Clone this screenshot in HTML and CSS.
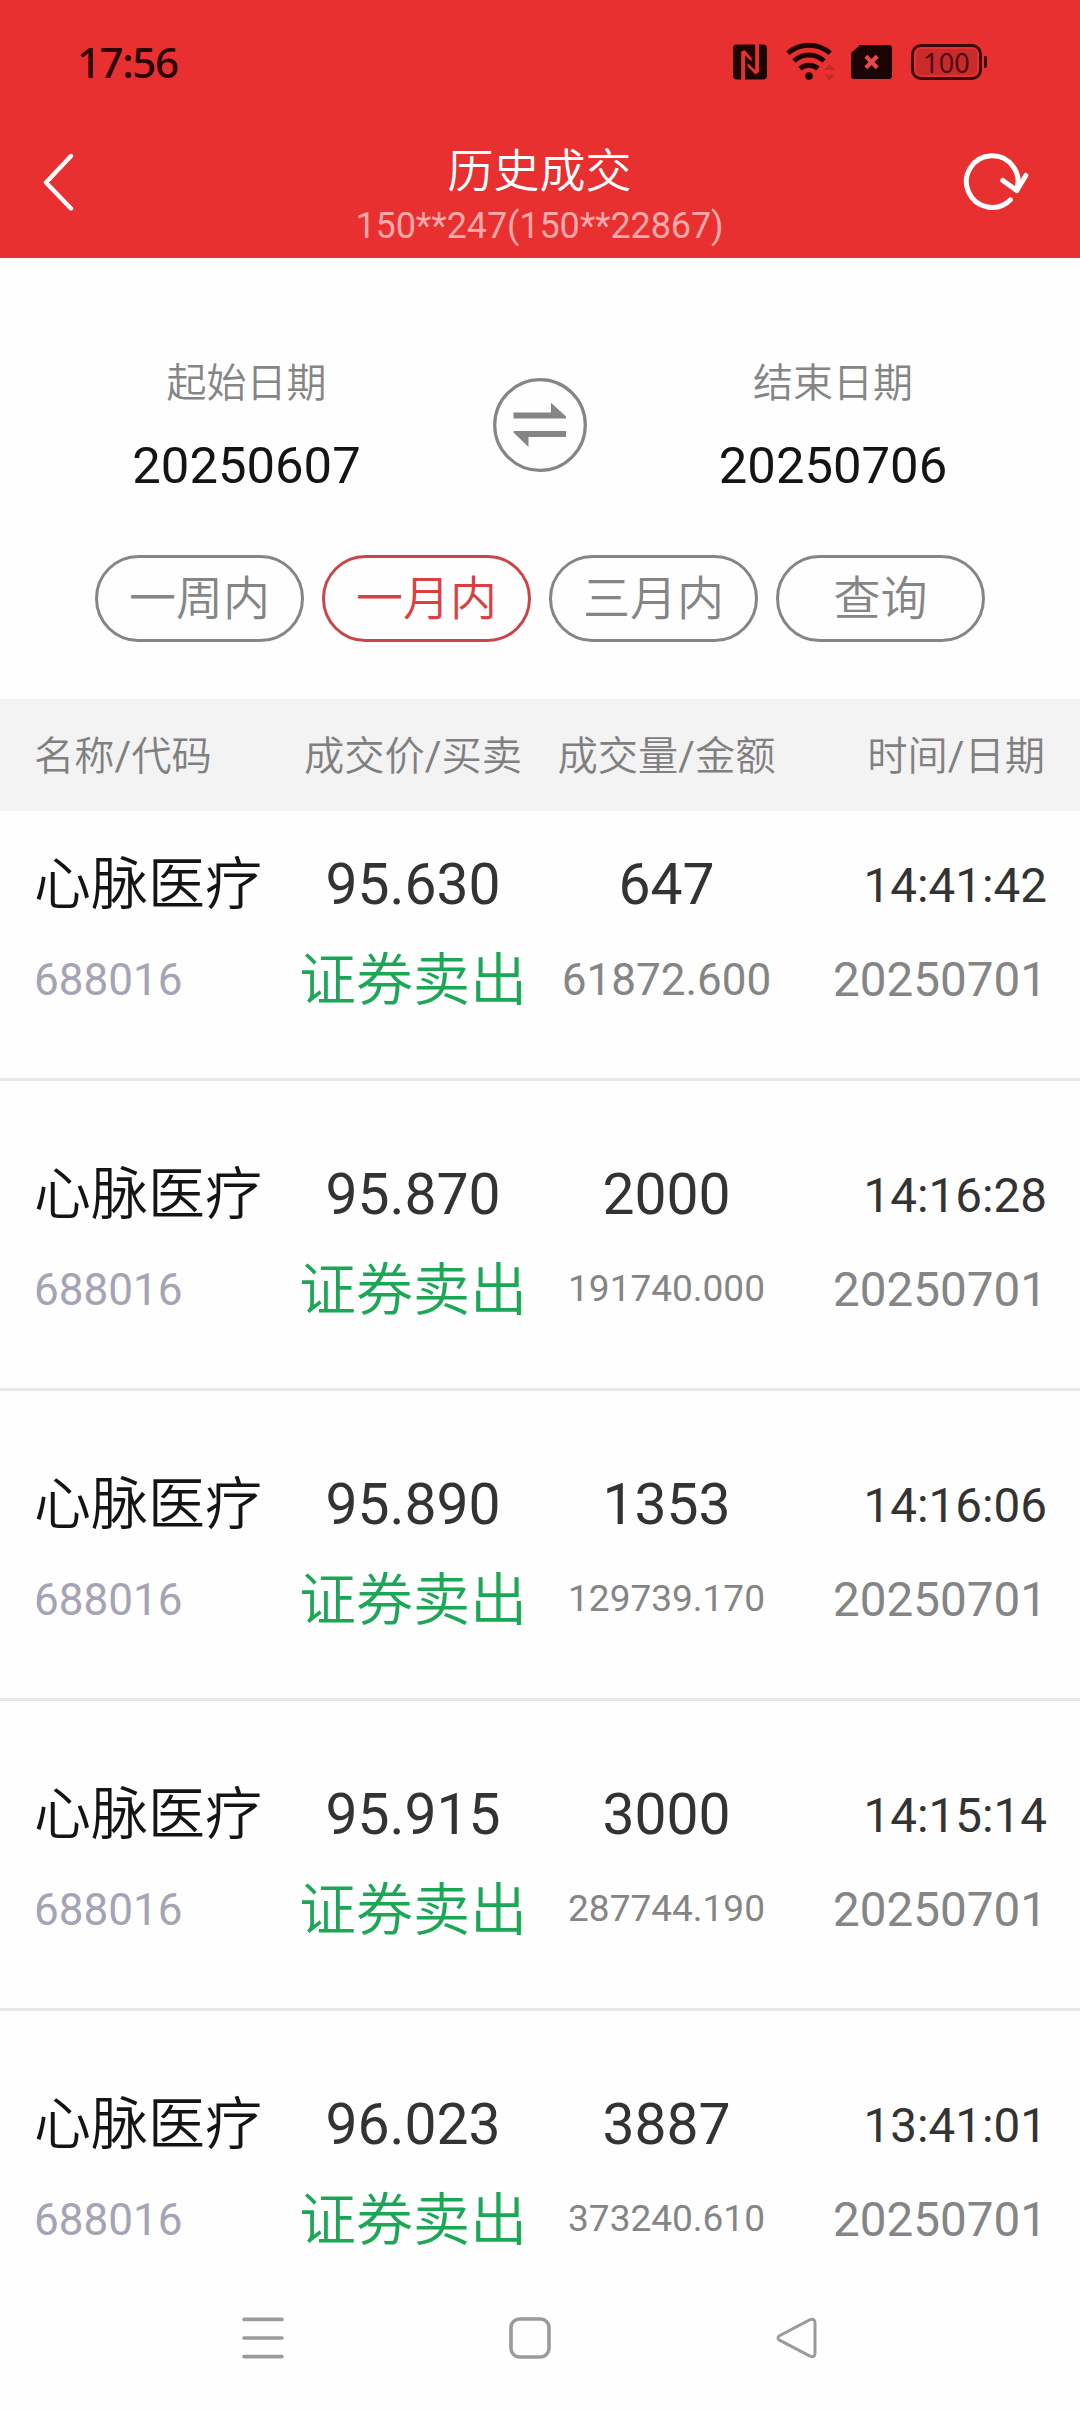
FILE: index.html
```html
<!DOCTYPE html>
<html lang="zh-CN">
<head>
    <meta charset="UTF-8">
    <meta name="viewport" content="width=device-width, initial-scale=1.0">
    <title>历史成交</title>
    <link rel="stylesheet" href="styles.css">
</head>
<body>
    <div class="status-bar">
        <span class="clock">17:56</span>
        <div class="status-icons">
            <!-- NFC -->
            <svg class="icon-nfc" width="34" height="36" viewBox="0 0 34 36">
                <rect x="0" y="0.5" width="34" height="35" rx="4" fill="#1c0304"/>
                <path d="M8.2 36V7.5L11.5 6L18.6 14V17.5L12 11.2V36ZM22.2 0H26V28L22.5 30.5L14.6 22.5V19L22.2 26Z" fill="#e83030"/>
            </svg>
            <!-- WiFi -->
            <svg class="icon-wifi" width="50" height="40" viewBox="0 0 50 40">
                <g fill="none" stroke="#1c0304" stroke-width="5">
                    <path d="M1.8 12.2A32 32 0 0 1 44.2 12.2"/>
                    <path d="M8 20A22 22 0 0 1 38 20"/>
                    <path d="M14 27.6A13.5 13.5 0 0 1 32 27.6"/>
                </g>
                <circle cx="23" cy="35" r="3.8" fill="#1c0304"/>
                <path d="M38 29L43.5 23L49 29ZM38 33.5H49L43.5 39.5Z" fill="#c8282a"/>
            </svg>
            <!-- SIM -->
            <svg class="icon-sim" width="41" height="34" viewBox="0 0 41 34">
                <path d="M9 0H38Q41 0 41 3V31Q41 34 38 34H3Q0 34 0 31V8Z" fill="#1c0304"/>
                <path d="M14.8 11.2L26.2 22.8M26.2 11.2L14.8 22.8" stroke="#e84a4a" stroke-width="4.2"/>
            </svg>
            <div class="battery">100</div>
        </div>
    </div>

    <div class="header">
        <svg class="back" width="32" height="58" viewBox="0 0 32 58">
            <path d="M28 3L3 29.5L28 55.5" fill="none" stroke="#fff" stroke-width="4.4" stroke-linecap="round" stroke-linejoin="round"/>
        </svg>
        <div class="header-title">
            <h1>历史成交</h1>
            <div class="account">150**247(150**22867)</div>
        </div>
        <svg class="refresh" width="66" height="60" viewBox="0 0 66 60">
            <g fill="none" stroke="#fff" stroke-width="5" stroke-linecap="round" stroke-linejoin="round">
                <path d="M47.5 46.8A25.8 25.8 0 1 1 53.6 37"/>
                <path d="M39.8 27.5L53.8 37.5L62.8 22.5"/>
            </g>
        </svg>
    </div>

    <div class="filter">
        <div class="dates">
            <div class="date-item">
                <div class="date-label">起始日期</div>
                <div class="date-value">20250607</div>
            </div>
            <svg class="swap" width="94" height="94" viewBox="0 0 94 94">
                <circle cx="47" cy="47" r="45.3" fill="none" stroke="#858585" stroke-width="3.2"/>
                <path d="M20.5 34.5H58V24.7L73 38.5V40.5H20.5ZM73 59V53H20.5V54.5L35.5 69V59Z" fill="#858585"/>
            </svg>
            <div class="date-item">
                <div class="date-label">结束日期</div>
                <div class="date-value">20250706</div>
            </div>
        </div>
        <div class="buttons">
            <button>一周内</button>
            <button class="active">一月内</button>
            <button>三月内</button>
            <button>查询</button>
        </div>
    </div>

    <div class="grid-row table-head">
        <span>名称/代码</span>
        <span>成交价/买卖</span>
        <span>成交量/金额</span>
        <span>时间/日期</span>
    </div>

    <div class="list">
        <div class="grid-row record">
            <div><div class="top name">心脉医疗</div><div class="sub code">688016</div></div>
            <div><div class="top">95.630</div><div class="sub sell">证券卖出</div></div>
            <div><div class="top">647</div><div class="sub">61872.600</div></div>
            <div><div class="top time">14:41:42</div><div class="sub date">20250701</div></div>
        </div>
        <div class="grid-row record">
            <div><div class="top name">心脉医疗</div><div class="sub code">688016</div></div>
            <div><div class="top">95.870</div><div class="sub sell">证券卖出</div></div>
            <div><div class="top">2000</div><div class="sub small">191740.000</div></div>
            <div><div class="top time">14:16:28</div><div class="sub date">20250701</div></div>
        </div>
        <div class="grid-row record">
            <div><div class="top name">心脉医疗</div><div class="sub code">688016</div></div>
            <div><div class="top">95.890</div><div class="sub sell">证券卖出</div></div>
            <div><div class="top">1353</div><div class="sub small">129739.170</div></div>
            <div><div class="top time">14:16:06</div><div class="sub date">20250701</div></div>
        </div>
        <div class="grid-row record">
            <div><div class="top name">心脉医疗</div><div class="sub code">688016</div></div>
            <div><div class="top">95.915</div><div class="sub sell">证券卖出</div></div>
            <div><div class="top">3000</div><div class="sub small">287744.190</div></div>
            <div><div class="top time">14:15:14</div><div class="sub date">20250701</div></div>
        </div>
        <div class="grid-row record">
            <div><div class="top name">心脉医疗</div><div class="sub code">688016</div></div>
            <div><div class="top">96.023</div><div class="sub sell">证券卖出</div></div>
            <div><div class="top">3887</div><div class="sub small">373240.610</div></div>
            <div><div class="top time">13:41:01</div><div class="sub date">20250701</div></div>
        </div>
    </div>

    <div class="nav-bar">
        <svg width="42" height="42" viewBox="0 0 42 42">
            <path d="M2 2.4H40M2 21H40M2 39.6H40" stroke="#9b9b9b" stroke-width="3.6" stroke-linecap="round"/>
        </svg>
        <svg width="42" height="42" viewBox="0 0 42 42">
            <rect x="2" y="2" width="38" height="38" rx="8.5" fill="none" stroke="#9b9b9b" stroke-width="3.6"/>
        </svg>
        <svg width="42" height="42" viewBox="0 0 42 42">
            <path d="M3.5 18.8L34 2.6Q39 1 39 6V36Q39 41 34 39.2L3.5 23.2Q0.5 21 3.5 18.8Z" fill="none" stroke="#9b9b9b" stroke-width="3"/>
        </svg>
    </div>
</body>
</html>
```
FILE: styles.css
```css
* {
    box-sizing: border-box;
    margin: 0;
    padding: 0;
}

body {
    width: 1080px;
    height: 2412px;
    overflow: hidden;
    display: flex;
    flex-direction: column;
    background-color: #fefefe;
    color: #333;
    font-family: Roboto, 'Noto Sans CJK SC DemiLight', 'Noto Sans CJK SC', sans-serif;
}

svg {
    display: block;
}

/* 状态栏 */
.status-bar {
    height: 124px;
    padding: 0 98px 0 77px;
    display: flex;
    align-items: center;
    justify-content: space-between;
    background-color: #e83030;
}

.clock {
    font-family: 'Noto Sans', sans-serif;
    font-size: 42px;
    font-weight: 500;
    line-height: 60px;
    letter-spacing: -1.4px;
    padding-bottom: 1px;
    color: #2a0405;
}

.status-icons {
    display: flex;
    align-items: center;
}

.icon-wifi {
    margin: 0 15px 2px 19px;
}

.battery {
    position: relative;
    width: 71px;
    height: 36px;
    margin-left: 19px;
    border: 3px solid #3a0a0b;
    border-radius: 10px;
    background: #c92a2b content-box;
    padding: 2px;
    font-family: 'Noto Sans', sans-serif;
    font-size: 27px;
    line-height: 27px;
    text-align: center;
    color: #4a0c0e;
}

.battery::after {
    content: '';
    position: absolute;
    right: -8px;
    top: 9px;
    width: 3px;
    height: 12px;
    border-radius: 0 2px 2px 0;
    background-color: #3a0a0b;
}

/* 标题栏 */
.header {
    height: 134px;
    padding: 16px 51px 0 43px;
    display: flex;
    justify-content: space-between;
    background-color: #e83030;
    color: #fff;
}

.back {
    width: 32px;
    margin: 13px 34px 0 0;
}

.refresh {
    margin-top: 13px;
}

.header-title {
    text-align: center;
    padding: 1px 0 0 7px;
}

.header-title h1 {
    font-size: 46px;
    font-weight: 400;
    line-height: 61px;
}

.account {
    font-size: 36px;
    line-height: 49px;
    letter-spacing: -0.1px;
    color: #ffa9a9;
}

/* 日期筛选 */
.filter {
    height: 441px;
    padding-top: 96px;
}

.dates {
    display: flex;
    justify-content: center;
    height: 201px;
}

.date-item {
    width: 492px;
    text-align: center;
}

.date-item:first-child {
    padding-right: 1px;
}

.date-label {
    font-size: 40px;
    line-height: 60px;
    color: #858585;
}

.date-value {
    margin-top: 21px;
    font-size: 50.8px;
    line-height: 62px;
    color: #141414;
}

.swap {
    margin-top: 24px;
}

.buttons {
    display: flex;
    justify-content: center;
    gap: 18px;
}

button {
    width: 209px;
    height: 87px;
    border: 3px solid #858585;
    border-radius: 44px;
    background: none;
    font-family: inherit;
    font-size: 47px;
    line-height: 80px;
    color: #858585;
}

button.active {
    border-color: #cb4548;
    color: #dc3f42;
}

/* 成交列表 */
.grid-row {
    display: grid;
    grid-template-columns: 261px 236px 271px 1fr;
    padding: 0 33px 0 34px;
    text-align: center;
}

.grid-row > :first-child {
    text-align: left;
}

.grid-row > :last-child {
    text-align: right;
}

.table-head {
    height: 112px;
    line-height: 115px;
    padding-right: 35px;
    background-color: #f3f3f3;
    font-size: 40.3px;
    color: #808080;
}

.list {
    flex: 1;
    overflow: hidden;
}

.record {
    height: 310px;
    padding-top: 67px;
    border-bottom: 3px solid #e8e8e8;
    white-space: nowrap;
}

.record:first-child {
    height: 270px;
    padding-top: 27px;
}

.record:last-child {
    border-bottom: none;
}

.top {
    font-size: 57px;
    line-height: 94px;
}

.sub {
    font-size: 44px;
    line-height: 96px;
    color: #858585;
}

.name {
    color: #141414;
}

.code {
    color: #a4a4b4;
}

.sell {
    font-size: 57px;
    line-height: 97px;
    color: #1ca757;
}

.small {
    font-size: 37px;
    line-height: 94px;
}

.time,
.date {
    font-size: 47.6px;
}

.time {
    padding-top: 2px;
    line-height: 92px;
}

/* 底部导航 */
.nav-bar {
    height: 150px;
    padding: 55px 262px 0 242px;
    display: flex;
    justify-content: space-between;
}
```
